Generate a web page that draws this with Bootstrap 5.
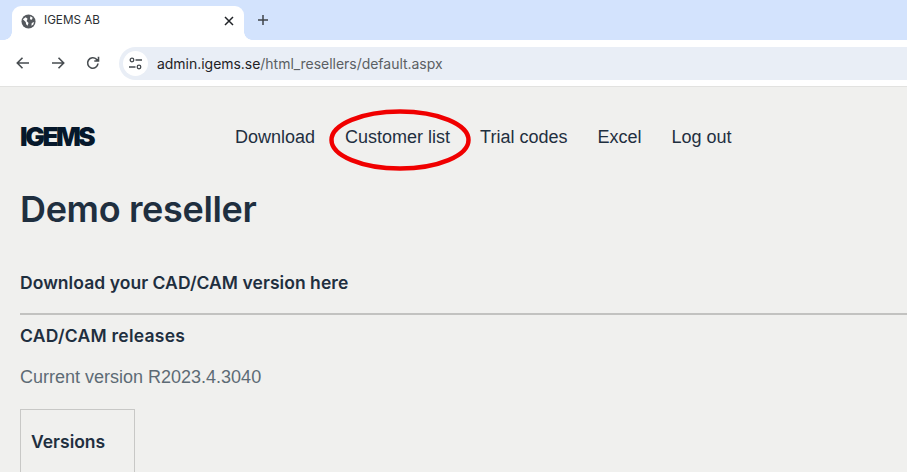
<!DOCTYPE html>
<html lang="en">
<head>
<meta charset="utf-8">
<title>IGEMS AB</title>
<link href="https://cdn.jsdelivr.net/npm/bootstrap@5.3.0/dist/css/bootstrap.min.css" rel="stylesheet">
<style>
html,body{height:472px;overflow:hidden}
body{background:#f0f0ee;color:#1f2f3f;font-family:"Liberation Sans",Arial,sans-serif}
.tabstrip{height:40px;background:#d3e3fd;padding-left:12px;padding-top:6px}
.browser-tab{position:relative;width:232px;height:34px;background:#fff;border-radius:9px 9px 0 0;padding:0 9px 4px;font-size:11.7px;color:#2b2f33;gap:8px;font-family:"Inter",sans-serif}
.browser-tab::before,.browser-tab::after{content:"";position:absolute;bottom:0;width:8px;height:8px}
.browser-tab::before{left:-8px;background:radial-gradient(circle at 0 0,transparent 7.500px,#fff 8px)}
.browser-tab::after{right:-8px;background:radial-gradient(circle at 100% 0,transparent 7.500px,#fff 8px)}
.browser-tab .tab-title{flex:1}
.newtab{margin-left:12px;width:16px;height:28px}
.toolbar{height:47px;background:#fff;border-bottom:1px solid #e2e2e0;padding:0 0 0 14px}
.navicon{width:18px;height:18px;margin-right:17px}
.navicon:nth-child(3){margin-right:18px}
.omnibox{flex:1;height:33px;background:#e9eef6;border-radius:17px 0 0 17px;padding-left:4px;gap:9px;font-size:14px;color:#5b5f63;font-family:"Inter",sans-serif;letter-spacing:-.03px;margin-left:-1px}
.omnibox b{font-weight:400;color:#1f2225}
.sitebtn{width:25px;height:25px;border-radius:50%;background:#fff}
.sitewrap{padding:22px 0 0 20px;position:relative}
.sitehead{height:56px;gap:30px}
.brandmark{width:185px;font-family:"Inter",sans-serif;font-weight:900;font-size:26px;letter-spacing:-2.400px;color:#06182b;line-height:1}
.sitelink{font-size:18px;color:#1f2f3f;text-decoration:none}
.pagetitle{font-family:"Inter",sans-serif;font-weight:600;font-size:36px;line-height:44px;margin:22px 0 0;color:#1f2f3f;letter-spacing:-.35px}
.subhead{font-family:"Inter",sans-serif;font-weight:600;font-size:17.500px;line-height:22px;margin:0;color:#1f2f3f}
.lead-sub{margin-top:41px;letter-spacing:.05px}
.rule{height:2px;background:#c2c2c0;margin-top:19px}
.rel{margin-top:10px;letter-spacing:.25px}
.curver{font-size:18px;line-height:22px;color:#5d6b75;margin-top:19px}
.versionbox{width:115px;height:80px;border:1px solid #c8c8c6;border-bottom:0;margin-top:21px;padding:21px 10px}
.circle-mark{position:absolute;left:328px;top:108px;width:143px;height:64px}
</style>
</head>
<body>
<div class="tabstrip d-flex">
  <div class="browser-tab d-flex align-items-center">
    <svg width="15" height="15" viewBox="0 0 16 16"><circle cx="8" cy="8" r="7.500" fill="#55595e"/><path d="M2 5.500 5 3.500 7 5 6 7.500 8 9.500 7 12.500 5.500 11 5 8.500ZM10 2.500l2.500 1.500-1 2-2-.5ZM11.500 9.500l2.500-1-1 3-2 1Z" fill="#fff"/></svg>
    <span class="tab-title">IGEMS AB</span>
    <svg width="12" height="12" viewBox="0 0 12 12"><path d="M2 2l8 8M10 2l-8 8" stroke="#202327" stroke-width="1.500" fill="none"/></svg>
  </div>
  <div class="newtab d-flex align-items-center">
    <svg width="14" height="14" viewBox="0 0 14 14"><path d="M7 2v10M2 7h10" stroke="#3f4449" stroke-width="1.500" fill="none"/></svg>
  </div>
</div>
<div class="toolbar d-flex align-items-center">
  <svg class="navicon" viewBox="0 0 18 18"><path d="M15 9H3.500M8.500 3.800 3.300 9l5.200 5.200" stroke="#474c50" stroke-width="1.600" fill="none"/></svg>
  <svg class="navicon" viewBox="0 0 18 18"><path d="M3 9h11.500M9.500 3.800 14.700 9l-5.200 5.200" stroke="#474c50" stroke-width="1.600" fill="none"/></svg>
  <svg class="navicon" viewBox="0 0 18 18"><path d="M14 9.500A5.200 5.200 0 1 1 12.500 5.300L14.500 7M14.500 2.800V7H10.300" stroke="#474c50" stroke-width="1.600" fill="none"/></svg>
  <div class="omnibox d-flex align-items-center">
    <span class="sitebtn d-flex align-items-center justify-content-center">
      <svg width="15" height="15" viewBox="0 0 15 15"><g stroke="#43484d" stroke-width="1.300" fill="none"><circle cx="4" cy="4" r="1.800"/><path d="M7.500 4H14M1 11h6.500"/><circle cx="11" cy="11" r="1.800"/></g></svg>
    </span>
    <span><b>admin.igems.se</b>/html_resellers/default.aspx</span>
  </div>
</div>
<main class="sitewrap">
  <nav class="sitehead d-flex align-items-center">
    <div class="brandmark flex-shrink-0">IGEMS</div>
    <a class="sitelink" href="#">Download</a>
    <a class="sitelink" href="#">Customer list</a>
    <a class="sitelink" href="#">Trial codes</a>
    <a class="sitelink" href="#">Excel</a>
    <a class="sitelink" href="#">Log out</a>
  </nav>
  <h1 class="pagetitle">Demo reseller</h1>
  <h2 class="subhead lead-sub">Download your CAD/CAM version here</h2>
  <div class="rule"></div>
  <h2 class="subhead rel">CAD/CAM releases</h2>
  <p class="curver mb-0">Current version R2023.4.3040</p>
  <div class="versionbox"><h3 class="subhead">Versions</h3></div>
</main>
<svg class="circle-mark" viewBox="0 0 143 64"><ellipse cx="72" cy="32" rx="68.500" ry="28.500" fill="none" stroke="#f00000" stroke-width="4.500"/></svg>
<script src="https://cdn.jsdelivr.net/npm/bootstrap@5.3.0/dist/js/bootstrap.bundle.min.js"></script>
</body>
</html>
